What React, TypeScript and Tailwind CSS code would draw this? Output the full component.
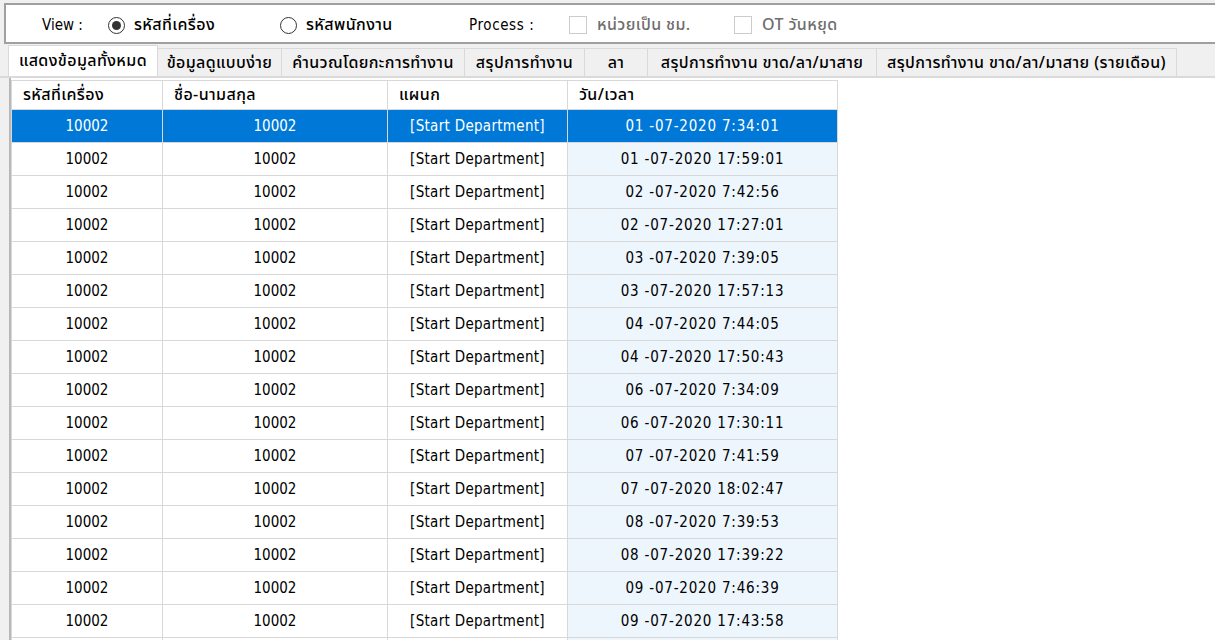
import React from "react";

const FONT = { fontFamily: '"DejaVu Sans Condensed", "Liberation Sans", "Noto Sans Thai", sans-serif' };

type Row = { id: string; name: string; dept: string; time: string };

const times = [
  "01 -07-2020 7:34:01",
  "01 -07-2020 17:59:01",
  "02 -07-2020 7:42:56",
  "02 -07-2020 17:27:01",
  "03 -07-2020 7:39:05",
  "03 -07-2020 17:57:13",
  "04 -07-2020 7:44:05",
  "04 -07-2020 17:50:43",
  "06 -07-2020 7:34:09",
  "06 -07-2020 17:30:11",
  "07 -07-2020 7:41:59",
  "07 -07-2020 18:02:47",
  "08 -07-2020 7:39:53",
  "08 -07-2020 17:39:22",
  "09 -07-2020 7:46:39",
  "09 -07-2020 17:43:58",
];

const rows: Row[] = times.map((t) => ({ id: "10002", name: "10002", dept: "[Start Department]", time: t }));

const tabs = [
  { label: "แสดงข้อมูลทั้งหมด", w: "w-[150px]" },
  { label: "ข้อมูลดูแบบง่าย", w: "w-[125px]" },
  { label: "คำนวณโดยกะการทำงาน", w: "w-[184px]" },
  { label: "สรุปการทำงาน", w: "w-[121px]" },
  { label: "ลา", w: "w-[64px]" },
  { label: "สรุปการทำงาน ขาด/ลา/มาสาย", w: "w-[230px]" },
  { label: "สรุปการทำงาน ขาด/ลา/มาสาย (รายเดือน)", w: "w-[301px]" },
];

// Thai text: Noto Sans Thai is narrower than Tahoma, so bump it a little
function Th({ children }: { children: React.ReactNode }) {
  return (
    <span className="text-[16px] font-medium tracking-[0.4px]" style={{ fontFamily: '"Noto Sans Thai", "DejaVu Sans Condensed", "Liberation Sans", sans-serif' }}>
      {children}
    </span>
  );
}

function Radio({ checked, label }: { checked: boolean; label: string }) {
  return (
    <div className="flex items-center gap-[9px]">
      <div className="flex h-[17px] w-[17px] items-center justify-center rounded-full border border-[#333] bg-white">
        {checked ? <div className="h-[9px] w-[9px] rounded-full bg-[#333]" /> : null}
      </div>
      <span className="text-black">
        <Th>{label}</Th>
      </span>
    </div>
  );
}

function Check({ label }: { label: string }) {
  return (
    <div className="flex items-center gap-[10px]">
      <div className="h-[18px] w-[18px] border border-[#cccccc] bg-white" />
      <span className="text-[#6d6d6d]">
        <Th>{label}</Th>
      </span>
    </div>
  );
}

export default function App() {
  return (
    <div className="h-[640px] w-[1215px] overflow-hidden bg-[#f0f0f0] pt-[3px] text-[15px]" style={FONT}>
      {/* top options panel */}
      <div className="ml-[4px] flex h-[41px] items-center whitespace-nowrap border-t-2 border-b-2 border-l-2 border-[#a0a0a0] bg-white pl-[36px] pt-[3px]">
        <div className="w-[66px] text-black">View :</div>
        <div className="w-[172px]">
          <Radio checked label="รหัสที่เครื่อง" />
        </div>
        <div className="w-[189px]">
          <Radio checked={false} label="รหัสพนักงาน" />
        </div>
        <div className="w-[100px] tracking-[0.6px] text-black">Process :</div>
        <div className="w-[165px]">
          <Check label="หน่วยเป็น ชม." />
        </div>
        <Check label="OT วันหยุด" />
      </div>

      {/* tabs */}
      <div className="flex h-[32px] items-end whitespace-nowrap pl-[8px]">
        {tabs.map((t, i) =>
          i === 0 ? (
            <div
              key={t.label}
              className={`${t.w} flex h-[31px] items-center justify-center border-x border-t border-[#d9d9d9] bg-white text-black`}
            >
              <Th>{t.label}</Th>
            </div>
          ) : (
            <div
              key={t.label}
              className={`${t.w} -ml-px flex h-[28px] items-center justify-center border border-b-0 border-[#d9d9d9] bg-[#f0f0f0] text-black`}
            >
              <Th>{t.label}</Th>
            </div>
          )
        )}
      </div>

      {/* tab page */}
      <div className="flex h-full border-t-2 border-[#dadada]">
        <div className="w-[9px] shrink-0 bg-[#f0f0f0]" />
        <div className="flex-1 border-l-2 border-[#b8b8b8] bg-white pt-[2px]">
          <table className="border-collapse text-black">
            <colgroup>
              <col className="w-[151px]" />
              <col className="w-[225px]" />
              <col className="w-[180px]" />
              <col className="w-[270px]" />
            </colgroup>
            <thead>
              <tr className="h-[29px]">
                {["รหัสที่เครื่อง", "ชื่อ-นามสกุล", "แผนก", "วัน/เวลา"].map((h) => (
                  <th key={h} className="border border-[#d8d8d8] px-[11px] text-left font-normal">
                    <Th>{h}</Th>
                  </th>
                ))}
              </tr>
            </thead>
            <tbody>
              {rows.map((r, i) => {
                const sel = i === 0;
                return (
                  <tr key={i} className={`h-[33px] ${sel ? "bg-[#0078d7] text-white" : ""}`}>
                    <td className="border border-[#d8d8d8] pt-px text-center">{r.id}</td>
                    <td className="border border-[#d8d8d8] pt-px text-center">{r.name}</td>
                    <td className="border border-[#d8d8d8] pt-px text-center tracking-[0.3px]">{r.dept}</td>
                    <td className={`border border-[#d8d8d8] pt-px text-center tracking-[0.8px] ${sel ? "" : "bg-[#edf5fd]"}`}>
                      {r.time}
                    </td>
                  </tr>
                );
              })}
              {/* next row, scrolled below the edge */}
              <tr className="h-[33px]">
                <td className="border border-[#d8d8d8]" />
                <td className="border border-[#d8d8d8]" />
                <td className="border border-[#d8d8d8]" />
                <td className="border border-[#d8d8d8] bg-[#edf5fd]" />
              </tr>
            </tbody>
          </table>
        </div>
      </div>
    </div>
  );
}
